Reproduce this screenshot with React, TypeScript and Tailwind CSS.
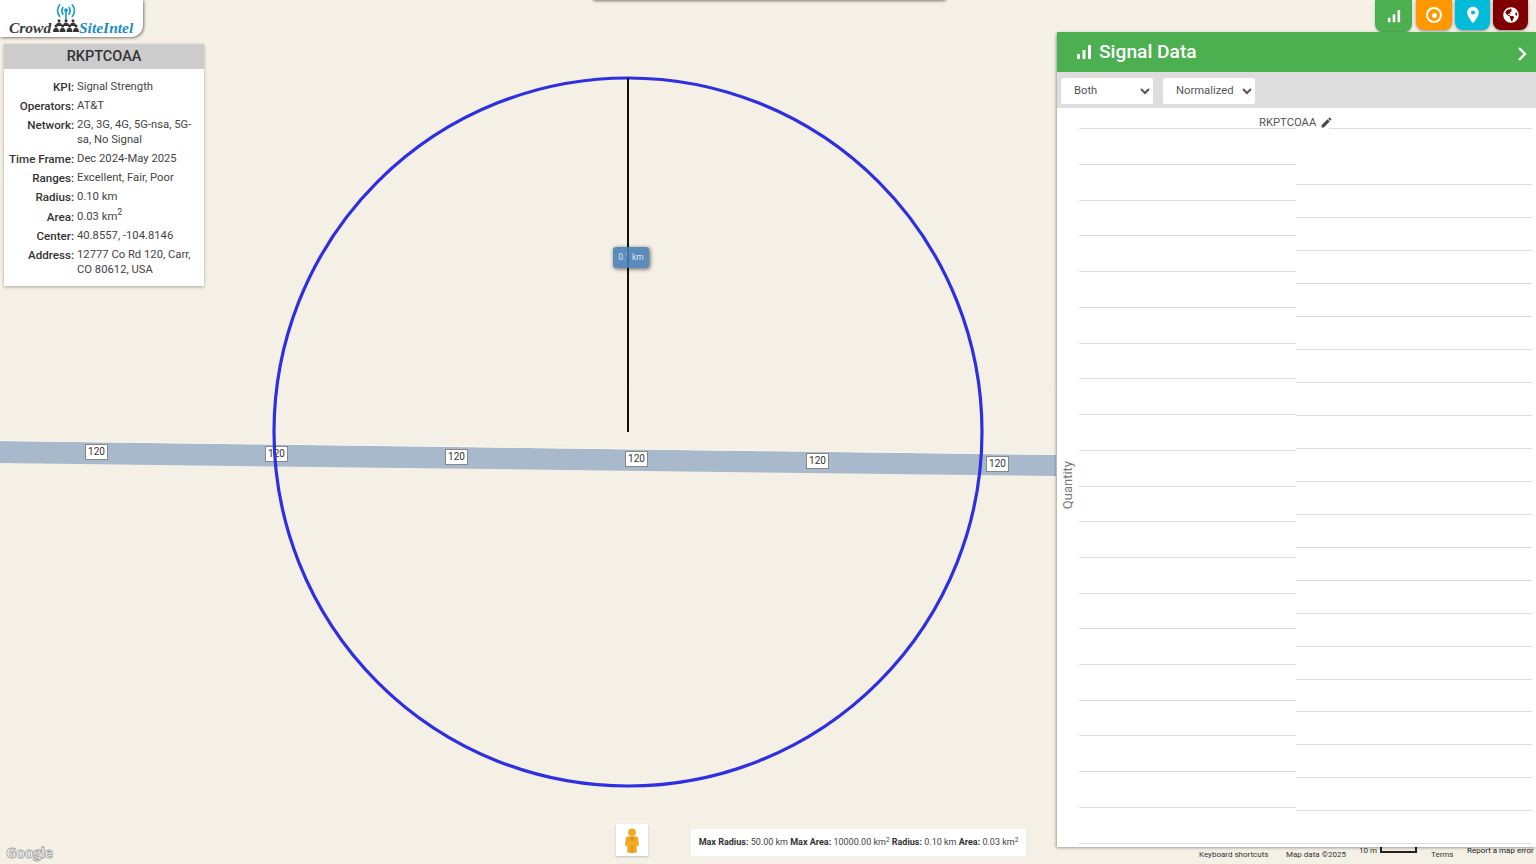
import { FaGlobeAmericas } from 'react-icons/fa';
import { MdEdit, MdLocationOn } from 'react-icons/md';

const infoRows = [
  { label: 'KPI:', value: 'Signal Strength' },
  { label: 'Operators:', value: 'AT&T' },
  { label: 'Network:', value: '2G, 3G, 4G, 5G-nsa, 5G-sa, No Signal' },
  { label: 'Time Frame:', value: 'Dec 2024-May 2025' },
  { label: 'Ranges:', value: 'Excellent, Fair, Poor' },
  { label: 'Radius:', value: '0.10 km' },
  { label: 'Area:', value: <>0.03 km<sup className="text-[9px] leading-none">2</sup></> },
  { label: 'Center:', value: '40.8557, -104.8146' },
  { label: 'Address:', value: '12777 Co Rd 120, Carr, CO 80612, USA' },
];

// road shield positions on the map
const shields = [
  { x: 85, y: 444 },
  { x: 265, y: 446 },
  { x: 445, y: 449 },
  { x: 625, y: 451 },
  { x: 806, y: 453 },
  { x: 986, y: 456 },
];

const leftGrid = [128, 164, 200, 235, 271, 307, 343, 378, 414, 450, 486, 521, 557, 593, 628, 664, 700, 735, 771, 807, 843];
const rightGrid = [184, 217, 250, 283, 316, 349, 382, 415, 448, 481, 514, 547, 580, 613, 646, 679, 711, 744, 777, 810, 843];

function BarsIcon({ className }: { className: string }) {
  return (
    <svg viewBox="0 0 16 16" className={className} fill="currentColor">
      <rect x="1" y="10" width="3" height="5" rx="0.6" />
      <rect x="6.5" y="6" width="3" height="9" rx="0.6" />
      <rect x="12" y="1" width="3" height="14" rx="0.6" />
    </svg>
  );
}

function Logo() {
  return (
    <div className="absolute left-0 top-0 w-[143px] h-[37px] bg-white rounded-br-xl shadow-[1px_1px_3px_rgba(0,0,0,0.5)] overflow-hidden">
      <svg viewBox="0 0 24 20" className="absolute left-[55px] top-[3px] w-[22px] h-[18px] text-[#1b9ccb]" fill="none" stroke="currentColor" strokeWidth="1.8" strokeLinecap="round">
        <path d="M5 2C2 6 2 11 5 15" />
        <path d="M8.5 5C7 7.5 7 10 8.5 12.5" />
        <path d="M19 2C22 6 22 11 19 15" />
        <path d="M15.5 5C17 7.5 17 10 15.5 12.5" />
        <path d="M12 9V19" />
        <circle cx="12" cy="8" r="1.2" fill="currentColor" />
      </svg>
      <span className="absolute left-[9px] top-[19px] font-['Liberation_Serif',serif] italic font-bold text-[15.5px] leading-[18px] text-[#3a3a3a]">Crowd</span>
      {/* crowd of people, two rows */}
      <svg viewBox="0 0 26 14" className="absolute left-[53px] top-[19px] w-[26px] h-[14px] text-[#333333]" fill="currentColor">
        <circle cx="6" cy="1.800" r="1.500" />
        <circle cx="13" cy="1.800" r="1.500" />
        <circle cx="20" cy="1.800" r="1.500" />
        <path d="M3 7C3 4.500 4.500 3.600 6 3.600S9 4.500 9 7ZM10 7C10 4.500 11.500 3.600 13 3.600S16 4.500 16 7ZM17 7C17 4.500 18.500 3.600 20 3.600S23 4.500 23 7Z" />
        <circle cx="3" cy="7" r="1.500" />
        <circle cx="9.500" cy="7" r="1.500" />
        <circle cx="16.500" cy="7" r="1.500" />
        <circle cx="23" cy="7" r="1.500" />
        <path d="M0 13C0 10 1.500 8.800 3 8.800S6 10 6 13ZM6.500 13C6.500 10 8 8.800 9.500 8.800S12.500 10 12.500 13ZM13.500 13C13.500 10 15 8.800 16.500 8.800S19.500 10 19.500 13ZM20 13C20 10 21.500 8.800 23 8.800S26 10 26 13Z" />
      </svg>
      <span className="absolute left-[79px] top-[19px] font-['Liberation_Serif',serif] italic font-bold text-[15.500px] leading-[18px] text-[#1b8fc0]">SiteIntel</span>
    </div>
  );
}

function InfoPanel() {
  return (
    <div className="absolute left-1 top-11 w-[200px] bg-white shadow-[0_1px_3px_rgba(0,0,0,0.3)] pb-[9px]">
      <div className="h-[25px] bg-[#cccccc] flex items-center justify-center pt-[1px] text-[14.5px] font-medium text-[#333333]">RKPTCOAA</div>
      <div className="flex flex-col gap-[4.75px] pt-[10.5px] text-[11.25px] leading-[14.5px] text-[#444444]">
        {infoRows.map((row) => (
          <div key={row.label} className="flex">
            <span className="w-[70px] shrink-0 text-right text-[11.6px] font-medium text-[#333333] whitespace-nowrap">{row.label}</span>
            <span className="ml-[3px] w-[120px]">{row.value}</span>
          </div>
        ))}
      </div>
    </div>
  );
}

function TabButtons() {
  return (
    <div className="absolute left-[1375px] top-0 flex gap-[3px] text-white">
      <div className="w-[37px] h-8 bg-[#4caf50] rounded-b-lg flex items-center justify-center shadow-[0_1px_2px_rgba(0,0,0,0.3)] mr-[1px]">
        <BarsIcon className="w-[14px] h-[14px]" />
      </div>
      <div className="w-9 h-[30px] bg-[#ff9800] rounded-b-lg flex items-center justify-center shadow-[0_1px_3px_rgba(0,0,0,0.4)]">
        <div className="w-4 h-4 rounded-full border-[2.5px] border-white flex items-center justify-center">
          <div className="w-[5px] h-[5px] rounded-full bg-white" />
        </div>
      </div>
      <div className="w-[35px] h-[30px] bg-[#00bcd9] rounded-b-lg flex items-center justify-center shadow-[0_1px_3px_rgba(0,0,0,0.4)]">
        <MdLocationOn className="w-[20px] h-[20px]" />
      </div>
      <div className="w-[35px] h-[30px] bg-[#7f0000] rounded-b-lg flex items-center justify-center shadow-[0_1px_3px_rgba(0,0,0,0.4)]">
        <FaGlobeAmericas className="w-4 h-4" />
      </div>
    </div>
  );
}

function SignalPanel() {
  return (
    <div className="absolute left-[1057px] top-8 w-[479px] h-[815px] bg-white flex flex-col shadow-[-1px_1px_3px_rgba(0,0,0,0.35)] rounded-tl-[3px]">
      <div className="h-10 shrink-0 bg-[#4caf50] flex items-center text-white pl-[19px] pr-[8px]">
        <BarsIcon className="w-4 h-4" />
        <span className="ml-[7px] text-[19.2px] font-medium">Signal Data</span>
        <svg viewBox="0 0 12 16" className="ml-auto mt-[3px] w-3 h-4" fill="none" stroke="currentColor" strokeWidth="2.400">
          <path d="M3 2L9 8L3 14" />
        </svg>
      </div>
      <div className="h-9 shrink-0 bg-[#dddddd] flex items-center gap-[10px] pl-1 pt-[1px]">
        <select className="w-[92px] h-[26px] bg-white rounded-[2px] pl-[9px] text-[11.25px] text-[#555555]" defaultValue="Both">
          <option>Both</option>
        </select>
        <select className="w-[92px] h-[26px] bg-white rounded-[2px] pl-[9px] text-[11.25px] text-[#555555]" defaultValue="Normalized">
          <option>Normalized</option>
        </select>
      </div>
      <div className="relative flex-1">
        <svg className="absolute left-0 top-0 w-[479px] h-[739px]" viewBox="1057 108 479 739" fill="none" stroke="#dddddd" strokeWidth="1">
          {leftGrid.map((y) => (
            <path key={y} d={`M1079 ${y + 0.5}H1296`} />
          ))}
          <path d="M1329 128.500H1532" />
          {rightGrid.map((y) => (
            <path key={y} d={`M1296 ${y + 0.5}H1532`} />
          ))}
        </svg>
        <div className="absolute left-[202px] top-2 flex items-center text-[11.25px] leading-[14px] text-[#555555]">
          RKPTCOAA
          <MdEdit className="ml-1 -mt-[2px] w-[13px] h-[13px] text-[#444444]" />
        </div>
        <span className="absolute left-[3px] top-[353px] text-[13px] leading-4 text-[#777777] [writing-mode:vertical-rl] rotate-180">Quantity</span>
      </div>
    </div>
  );
}

function Pegman() {
  return (
    <div className="absolute left-[616px] top-[824px] w-8 h-8 bg-white shadow-[0_1px_2px_rgba(0,0,0,0.2)] flex items-center justify-center">
      <svg viewBox="0 0 14 26" className="w-[14px] h-[25px]">
        <circle cx="7" cy="4.500" r="4" fill="#f2a91f" />
        <path d="M3 9H11C12.500 9 13 10 13 11L14 18H11.500V25.500H2.500V18H0L1 11C1 10 1.500 9 3 9Z" fill="#f2a91f" stroke="#d98c10" strokeWidth="0.500" />
        <path d="M7 18V25.500M5 9L7 13L9 9" fill="none" stroke="#c47f0c" strokeWidth="0.800" />
      </svg>
    </div>
  );
}

export default function App() {
  return (
    <div className="relative w-[1536px] h-[864px] overflow-hidden bg-[#f4f0e6] font-['Roboto',sans-serif]">
      {/* map drawing */}
      <svg className="absolute left-0 top-0 w-[1536px] h-[864px]" viewBox="0 0 1536 864" fill="none">
        <path d="M0 388.500H1056" stroke="#f1ede3" />
        <path d="M0 441L1056 455V476L0 463Z" fill="#a9b9cc" />
        <path d="M0 440.500L1056 454.500" stroke="#f8f5ee" />
      </svg>

      {shields.map((s) => (
        <div key={s.x} className="absolute w-[23px] h-4 bg-white border border-[#888888] flex items-center justify-center text-[10px] leading-none text-[#333333]" style={{ left: s.x, top: s.y }}>
          120
        </div>
      ))}

      {/* radius circle sits over the shields */}
      <svg className="absolute left-0 top-0 w-[1536px] h-[864px]" viewBox="0 0 1536 864" fill="none">
        <circle cx="628" cy="432" r="354" stroke="#2f2fe2" strokeWidth="3.200" />
        <path d="M628 78V432" stroke="#111111" strokeWidth="2" />
      </svg>

      {/* radius label */}
      <div className="absolute left-[613px] top-[247px] w-9 h-[21px] bg-[#5b8bbb] rounded-[3px] shadow-[1px_1px_4px_rgba(0,0,0,0.6)] flex items-center justify-center text-[8.500px] text-[#dbe6f0] whitespace-nowrap">
        0.1 km
        <div className="absolute left-[14px] top-0 w-[2px] h-[21px] bg-[#45749f]" />
      </div>

      {/* top center panel edge */}
      <div className="absolute left-[592px] top-[-4px] w-[355px] h-[4px] bg-white shadow-[0_1px_3px_rgba(0,0,0,0.5)] rounded-b-sm" />

      <Logo />
      <InfoPanel />
      <TabButtons />

      <Pegman />
      <div className="absolute left-[691px] top-[829px] w-[335px] h-[27px] bg-white flex items-center justify-center text-[9px] text-[#444444] whitespace-nowrap">
        <span><b className="font-bold text-[#333333]">Max Radius:</b> 50.00 km <b className="font-bold text-[#333333]">Max Area:</b> 10000.00 km<sup className="text-[6.5px]">2</sup> <b className="font-bold text-[#333333]">Radius:</b> 0.10 km <b className="font-bold text-[#333333]">Area:</b> 0.03 km<sup className="text-[6.5px]">2</sup></span>
      </div>

      {/* google attribution */}
      <span className="absolute left-[6px] top-[844px] text-[14.5px] leading-[18px] font-['Open_Sans',sans-serif] font-bold tracking-[-0.5px] text-[#ffffff] [-webkit-text-stroke:0.8px_#9a9a9a]">Google</span>
      <span className="absolute left-[1199px] top-[849px] text-[8px] leading-[11px] text-[#333333] whitespace-nowrap">Keyboard shortcuts</span>
      <span className="absolute left-[1286px] top-[849px] text-[8px] leading-[11px] text-[#333333] whitespace-nowrap">Map data ©2025</span>
      <span className="absolute left-[1359px] top-[845px] text-[8px] leading-[11px] text-[#333333] whitespace-nowrap">10 m</span>
      <div className="absolute left-[1380px] top-[847px] w-[37px] h-[6px] border-x-2 border-b-2 border-[#222222]" />
      <span className="absolute left-[1431px] top-[849px] text-[8px] leading-[11px] text-[#333333] whitespace-nowrap">Terms</span>
      <span className="absolute left-[1467px] top-[845px] text-[8px] leading-[11px] text-[#222222] whitespace-nowrap">Report a map error</span>

      <SignalPanel />
    </div>
  );
}
